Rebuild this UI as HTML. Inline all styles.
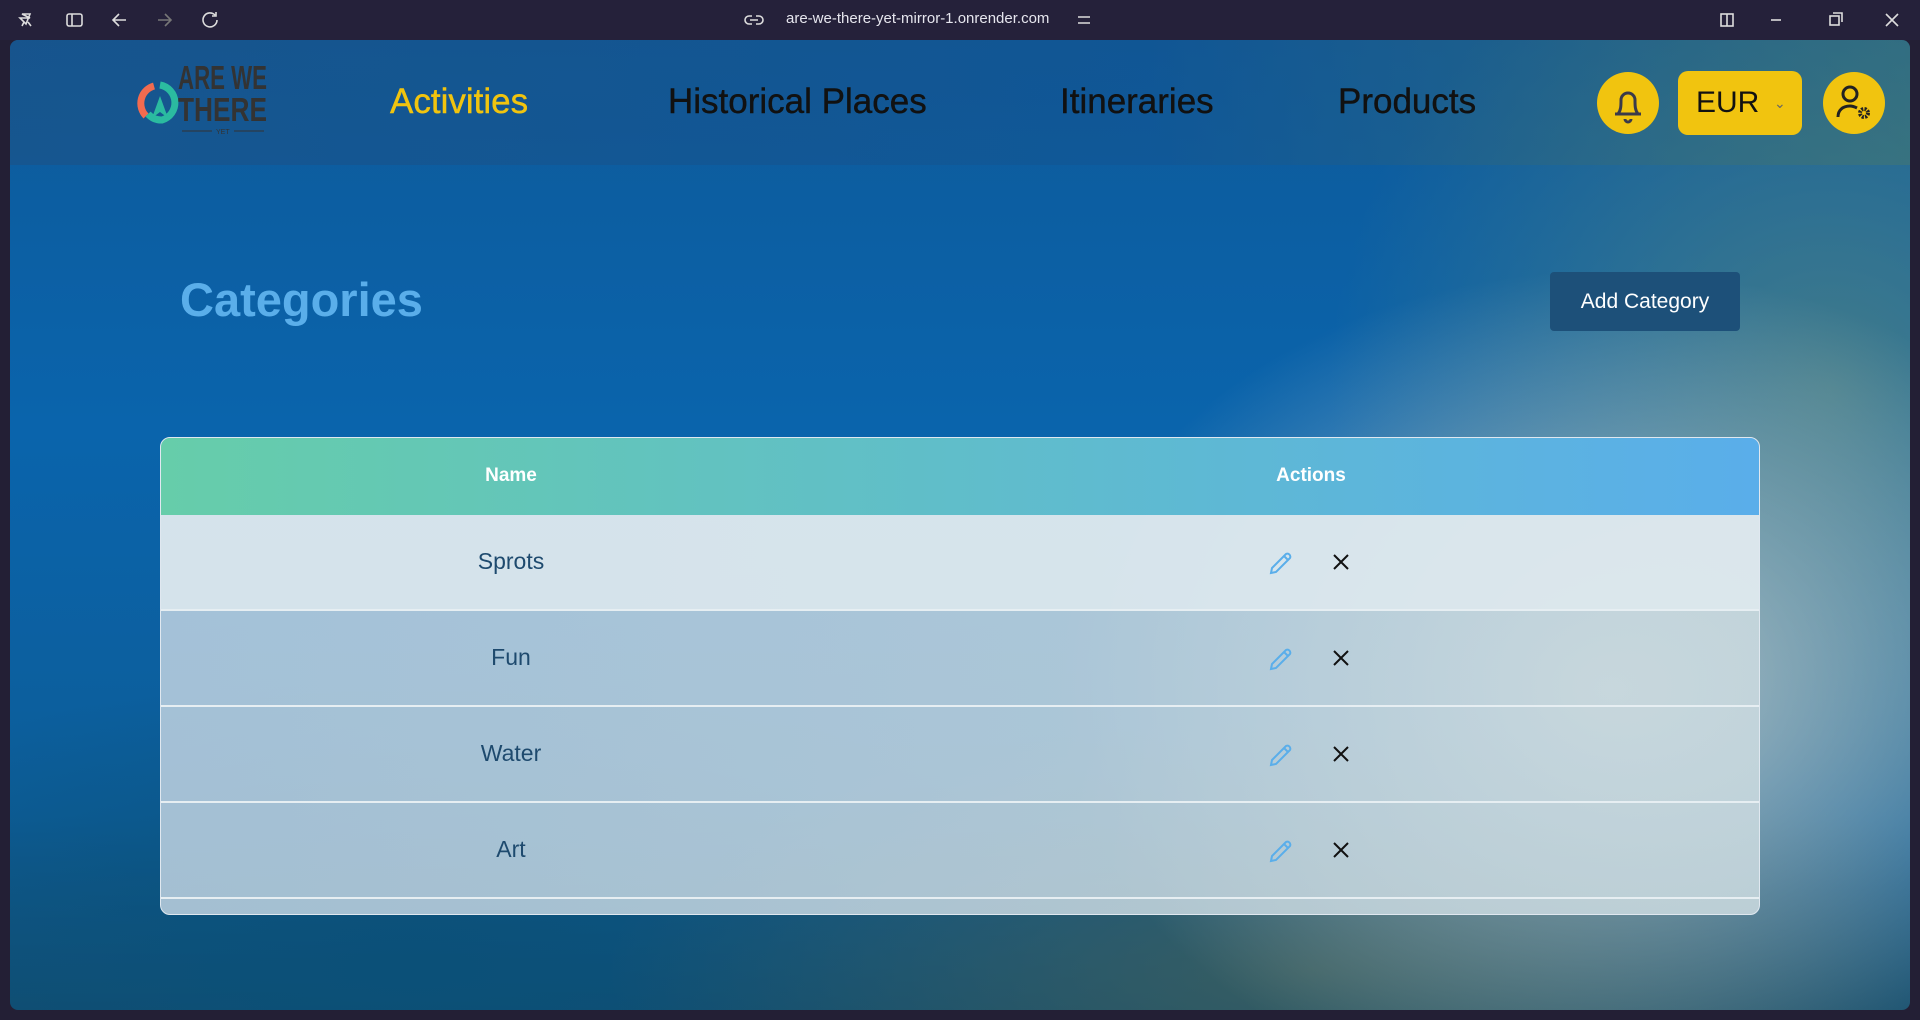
<!DOCTYPE html>
<html><head><meta charset="utf-8"><style>
*{margin:0;padding:0;box-sizing:border-box}
body{width:1920px;height:1020px;background:#231f35;overflow:hidden;font-family:"Liberation Sans",sans-serif;position:relative}
.top{position:absolute;left:0;top:0;width:1920px;height:40px;background:#25213a;color:#e8e8f0}
.url{position:absolute;left:786px;top:10px;font-size:15px;color:#e6e6ee}
.page{position:absolute;left:10px;top:40px;width:1900px;height:970px;border-radius:8px;overflow:hidden;
background:
radial-gradient(ellipse 550px 420px at 1600px 650px,rgba(200,208,205,.85),rgba(200,208,205,0)),
radial-gradient(ellipse 700px 250px at 1300px 930px,rgba(60,95,95,.9),rgba(60,95,95,0)),
radial-gradient(ellipse 500px 500px at 1820px 350px,rgba(80,130,130,.8),rgba(80,130,130,0)),
radial-gradient(ellipse 700px 300px at 400px 930px,rgba(10,80,120,.9),rgba(10,80,120,0)),
linear-gradient(180deg,#0e5a9a 0%,#0a64ac 40%,#0d5d98 80%,#124d70 100%)}
.nav{position:absolute;left:0;top:0;width:1900px;height:125px;background:linear-gradient(90deg,rgba(30,80,130,.55),rgba(20,80,140,.4) 60%,rgba(70,120,110,.5));}
.nav a{position:absolute;top:42px;font-size:35px;color:#111;text-decoration:none;-webkit-text-stroke:.4px currentColor}
.yc{position:absolute;background:#f1c40f;border-radius:50%;width:62px;height:62px;top:32px}
h1{position:absolute;left:170px;top:232px;font-size:47px;color:#5aaeea;font-weight:bold}
.btn{position:absolute;left:1540px;top:232px;width:190px;height:59px;background:#1d5079;border-radius:4px;color:#fff;font-size:21px;text-align:center;line-height:59px}
.tbl{position:absolute;left:150px;top:397px;width:1600px;height:478px;border-radius:10px;overflow:hidden;border:1px solid #e0e8f0;background:linear-gradient(90deg,rgba(190,210,225,.85),rgba(205,220,225,.85))}
.hd{height:77px;background:linear-gradient(90deg,#66cdaa,#5aaeea);color:#fff;font-weight:bold;font-size:19px;position:relative}
.row{height:96px;border-bottom:2px solid #e6eef2;position:relative;font-size:23px;color:#1e4a6e}
.c1{position:absolute;left:0;width:700px;text-align:center}
.hd .c1,.hd .c2{top:27px}
.c2{position:absolute;left:1150px;transform:translateX(-50%)}
.row .c1{top:33px}
.pen{position:absolute;left:1107px;top:35px}
.x{position:absolute;left:1171px;top:38px}
</style></head><body>
<div class="top">
<svg width="1920" height="40" style="position:absolute;left:0;top:0" fill="none" stroke="#ddd" stroke-width="1.6">
<path d="M22 14l8 0-4 10-6-6h10zM24 22l-2 4M28 22l3 4"/>
<rect x="67" y="14" width="15" height="12" rx="2"/><path d="M72 14v12"/>
<path d="M126 20h-12M119 14l-6 6 6 6"/>
<path d="M158 20h12M165 14l6 6-6 6" stroke="#777"/>
<path d="M215 15a7 7 0 1 0 2 5M216 12v4h-4"/>
<path d="M750 20h8M752 16h-3a4 4 0 0 0 0 8h3M756 16h3a4 4 0 0 1 0 8h-3"/>
<path d="M1078 17h12M1078 23h12"/>
<rect x="1721" y="14" width="12" height="12"/><path d="M1727 14v12"/>
<path d="M1771 20h10"/><rect x="1830" y="16" width="9" height="9"/><path d="M1833 13h9v9"/>
<path d="M1886 14l12 12M1898 14l-12 12"/>
</svg>
<div class="url">are-we-there-yet-mirror-1.onrender.com</div>
</div>
<div class="page">
<div class="nav">
<svg width="160" height="90" style="position:absolute;left:120px;top:18px">
<path d="M16 58a18 18 0 0 1 8-30" stroke="#f26b4f" stroke-width="7" fill="none"/>
<path d="M30 27a18 18 0 0 1 2 35a18 18 0 0 1-14-6" stroke="#2bbba0" stroke-width="7" fill="none"/>
<path d="M22 60l8-22 8 22-8-6z" fill="#2bbba0"/>
<text x="48" y="31" font-family="Liberation Sans Narrow,Liberation Sans" font-weight="bold" font-size="33" fill="#333" textLength="89" lengthAdjust="spacingAndGlyphs">ARE WE</text>
<text x="48" y="63" font-family="Liberation Sans Narrow,Liberation Sans" font-weight="bold" font-size="33" fill="#333" textLength="89" lengthAdjust="spacingAndGlyphs">THERE</text>
<path d="M52 73h30M104 73h30" stroke="#333"/><text x="86" y="76" font-size="7" fill="#333">YET</text>
</svg>
<a style="left:380px;color:#f1c40f">Activities</a>
<a style="left:658px">Historical Places</a>
<a style="left:1050px">Itineraries</a>
<a style="left:1328px">Products</a>
<div class="yc" style="left:1587px"><svg width="62" height="62" fill="none" stroke="#3a3a4a" stroke-width="3"><path d="M18 42h26M21 42c3-4 3-8 3-14a7 7 0 0 1 14 0c0 6 0 10 3 14M28 47a3 3 0 0 0 6 0"/></svg></div>
<div style="position:absolute;left:1668px;top:31px;width:124px;height:64px;background:#f1c40f;border-radius:10px;font-size:30px;color:#111;line-height:64px;padding-left:18px">EUR<span style="position:absolute;left:96px;top:0;font-size:14px;color:#666">&#8964;</span></div>
<div class="yc" style="left:1813px"><svg width="62" height="62" fill="none" stroke="#222" stroke-width="3"><circle cx="27" cy="22" r="7"/><path d="M15 45c0-7 5-11 12-11 3 0 5 1 7 2"/><circle cx="41" cy="41" r="4" stroke-width="4" stroke-dasharray="2 1.2"/></svg></div>
</div>
<h1>Categories</h1>
<div class="btn">Add Category</div>
<div class="tbl">
<div class="hd"><div class="c1">Name</div><div class="c2">Actions</div></div>
<div class="row" style="background:rgba(225,235,240,.8)"><div class="c1">Sprots</div><svg class="pen" width="26" height="26" fill="none" stroke="#5aaeea" stroke-width="2"><path d="M3 23l1-5L18 4a3 3 0 0 1 4 4L8 22z M16 6l4 4"/></svg><svg class="x" width="18" height="18" stroke="#111" stroke-width="2"><path d="M2 2l14 14M16 2L2 16"/></svg></div>
<div class="row"><div class="c1">Fun</div><svg class="pen" width="26" height="26" fill="none" stroke="#5aaeea" stroke-width="2"><path d="M3 23l1-5L18 4a3 3 0 0 1 4 4L8 22z M16 6l4 4"/></svg><svg class="x" width="18" height="18" stroke="#111" stroke-width="2"><path d="M2 2l14 14M16 2L2 16"/></svg></div>
<div class="row"><div class="c1">Water</div><svg class="pen" width="26" height="26" fill="none" stroke="#5aaeea" stroke-width="2"><path d="M3 23l1-5L18 4a3 3 0 0 1 4 4L8 22z M16 6l4 4"/></svg><svg class="x" width="18" height="18" stroke="#111" stroke-width="2"><path d="M2 2l14 14M16 2L2 16"/></svg></div>
<div class="row"><div class="c1">Art</div><svg class="pen" width="26" height="26" fill="none" stroke="#5aaeea" stroke-width="2"><path d="M3 23l1-5L18 4a3 3 0 0 1 4 4L8 22z M16 6l4 4"/></svg><svg class="x" width="18" height="18" stroke="#111" stroke-width="2"><path d="M2 2l14 14M16 2L2 16"/></svg></div>
</div>
</div>
</body></html>
